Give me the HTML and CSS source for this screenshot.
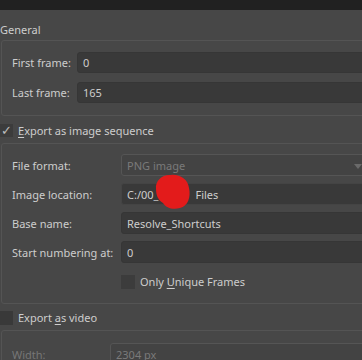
FILE: index.html
```html
<!DOCTYPE html>
<html>

<head>
<link rel="stylesheet" href="styles.css">
</head>

<body>
  <div class="topbar"></div>

  <div class="panel">
    <div class="section-title">General</div>
    <div class="group general">
      <div class="row">
        <span class="label">First frame:</span>
        <div class="field">0</div>
      </div>
      <div class="row">
        <span class="label">Last frame:</span>
        <div class="field">165</div>
      </div>
    </div>

    <div class="check-row first-check">
      <span class="checkbox">&#10003;</span>
      <span><u>E</u>xport as image sequence</span>
    </div>
    <div class="group sequence">
      <div class="row">
        <span class="label">File format:</span>
        <div class="field combo">PNG image<span class="arrow"></span></div>
        <div class="side-button"></div>
      </div>
      <div class="row">
        <span class="label">Image location:</span>
        <div class="field location">C:/00_<span class="hidden-part"></span>Files</div>
        <div class="side-button"></div>
      </div>
      <div class="row">
        <span class="label">Base name:</span>
        <div class="field">Resolve_Shortcuts</div>
      </div>
      <div class="row">
        <span class="label">Start numbering at:</span>
        <div class="field">0</div>
      </div>
      <div class="check-row unique">
        <span class="checkbox"></span>
        <span>Only <u>U</u>nique Frames</span>
      </div>
    </div>

    <div class="check-row video-check">
      <span class="checkbox"></span>
      <span>Export <u>a</u>s video</span>
    </div>
    <div class="group video">
      <div class="row">
        <span class="label disabled">Width:</span>
        <div class="field combo">2304 px</div>
      </div>
    </div>
  </div>

  <!-- red scribble drawn over the path -->
  <svg class="scribble" width="38" height="38" viewBox="0 0 38 38">
    <path d="M2 16 C1 7 9 1 17 2 C25 1 34 6 35 15 C37 24 34 33 26 35 C19 37 12 35 9 30 C4 27 2 22 2 16 Z" fill="#e31b1b"/>
  </svg>
</body>
</html>
```

FILE: styles.css
```css
/* dark dialog page, cut off on the right */
body {
    margin: 0;
    background-color: #474747;
    color: #cdcdcd;
    font-family: "Noto Sans", "Open Sans", sans-serif;
    font-size: 11px;
    overflow: hidden;
    width: 362px;
    height: 360px;
    position: relative;
}

.topbar {
    height: 10px;
    background-color: #212121;
}

.panel {
    width: 420px;
}

.section-title {
    padding: 12px 0 2px 0;
    line-height: 16px;
}

/* group boxes */
.group {
    margin-left: 1px;
    border: 1px solid #545454;
    border-radius: 3px;
    padding: 10px 8px 13px 10px;
    display: flex;
    flex-direction: column;
    gap: 8px;
}

.group.general {
    gap: 9px;
    padding-top: 11px;
    padding-bottom: 12px;
}

.group.sequence {
    padding-top: 10px;
    padding-bottom: 14px;
    gap: 7px;
}

.group.video {
    padding-top: 12px;
}

.row {
    display: flex;
    align-items: center;
    height: 22px;
}

.general .row {
    height: 21px;
}

.label {
    width: 65px;
    flex: none;
    white-space: nowrap;
}

.sequence .label {
    width: 109px;
}

.video .label {
    width: 98px;
}

.disabled {
    color: #767676;
}

/* line edits */
.field {
    flex: 1;
    height: 100%;
    box-sizing: border-box;
    background-color: #393939;
    border: 1px solid #363636;
    border-radius: 3px;
    padding-left: 5px;
    display: flex;
    align-items: center;
    white-space: nowrap;
}

.combo {
    background-color: #434343;
    border-color: #555555;
    color: #7a7a7a;
    position: relative;
}

.location {
    border-color: #444444;
}

.hidden-part {
    display: inline-block;
    width: 37px;
}

.arrow {
    position: absolute;
    right: 8px;
    top: 9px;
    border-left: 4px solid transparent;
    border-right: 4px solid transparent;
    border-top: 5px solid #6a6a6a;
}

.side-button {
    width: 32px;
    height: 100%;
    box-sizing: border-box;
    margin-left: 8px;
    background-color: #434343;
    border: 1px solid #585858;
    border-radius: 3px;
    flex: none;
}

/* check boxes */
.check-row {
    display: flex;
    align-items: center;
    gap: 5px;
}

.checkbox {
    width: 13px;
    height: 13px;
    flex: none;
    background-color: #3c3c3c;
    color: #bdbdbd;
    font-size: 13px;
    line-height: 13px;
    text-align: center;
}

.first-check {
    padding: 7px 0 5px 0;
}

.video-check {
    padding: 6px 0 5px 0;
}

.video-check .checkbox {
    height: 14px;
    background-color: #393939;
}

.unique {
    margin-top: 4px;
    padding-left: 109px;
}

.unique .checkbox {
    width: 14px;
    height: 14px;
}

u {
    text-decoration-thickness: 1px;
    text-underline-offset: 2px;
}

.scribble {
    position: absolute;
    left: 154px;
    top: 173px;
}
```
